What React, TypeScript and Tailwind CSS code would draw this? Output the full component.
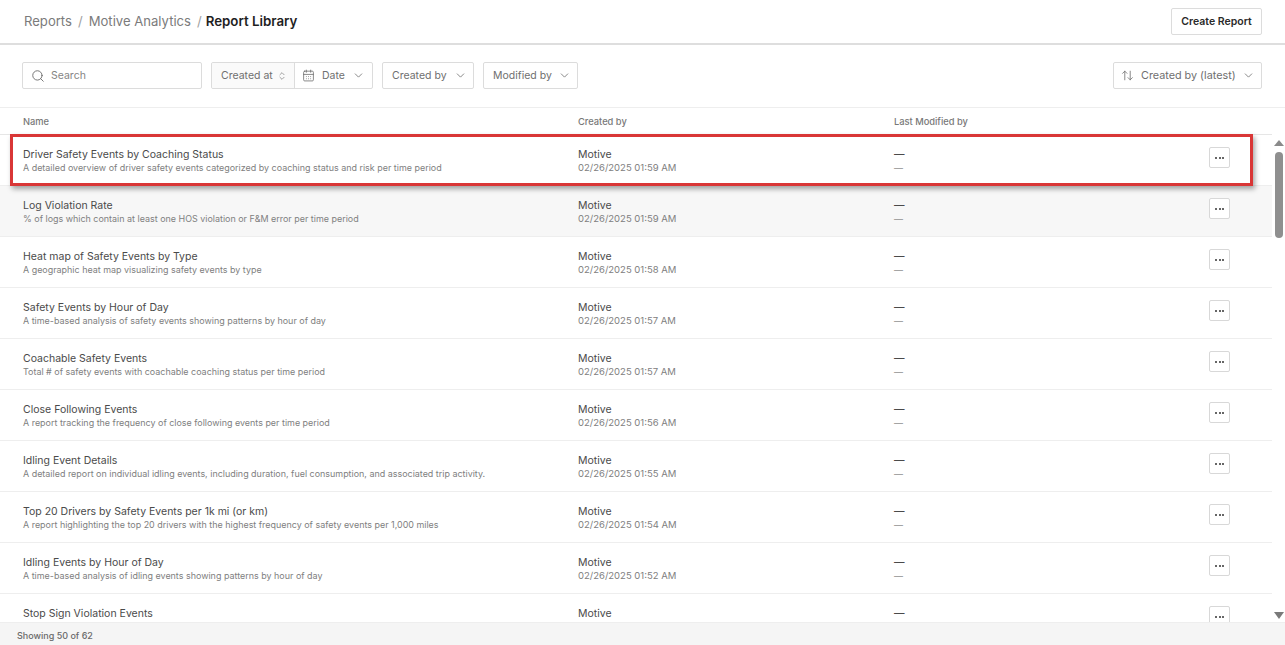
import React from "react";
import { Search, CalendarDays, ChevronDown, ChevronsUpDown, ArrowUpDown } from "lucide-react";

const rows = [
  ["Driver Safety Events by Coaching Status", "A detailed overview of driver safety events categorized by coaching status and risk per time period", "02/26/2025 01:59 AM"],
  ["Log Violation Rate", "% of logs which contain at least one HOS violation or F&M error per time period", "02/26/2025 01:59 AM"],
  ["Heat map of Safety Events by Type", "A geographic heat map visualizing safety events by type", "02/26/2025 01:58 AM"],
  ["Safety Events by Hour of Day", "A time-based analysis of safety events showing patterns by hour of day", "02/26/2025 01:57 AM"],
  ["Coachable Safety Events", "Total # of safety events with coachable coaching status per time period", "02/26/2025 01:57 AM"],
  ["Close Following Events", "A report tracking the frequency of close following events per time period", "02/26/2025 01:56 AM"],
  ["Idling Event Details", "A detailed report on individual idling events, including duration, fuel consumption, and associated trip activity.", "02/26/2025 01:55 AM"],
  ["Top 20 Drivers by Safety Events per 1k mi (or km)", "A report highlighting the top 20 drivers with the highest frequency of safety events per 1,000 miles", "02/26/2025 01:54 AM"],
  ["Idling Events by Hour of Day", "A time-based analysis of idling events showing patterns by hour of day", "02/26/2025 01:52 AM"],
  ["Stop Sign Violation Events", "A report tracking the frequency of stop sign violation events per time period", "02/26/2025 01:51 AM"],
];

const box = "h-[27px] border border-[#dcdcdc] rounded-[2px] bg-white flex items-center text-[10.5px] leading-[16px] text-[#6f6f6f] whitespace-nowrap";

export default function App() {
  return (
    <div className="relative w-[1285px] h-[645px] overflow-hidden bg-white flex flex-col font-['Inter',sans-serif]">
      <header className="h-[45px] shrink-0 border-b-2 border-[#dedede] flex items-center justify-between pl-[24px] pr-[23px]">
        <div className="flex items-center text-[13.1px] text-[#7b7b7b] gap-[6px]">
          <span>Reports</span>
          <span className="text-[#a0a0a0]">/</span>
          <span>Motive Analytics</span>
          <span className="text-[#a0a0a0]">/</span>
          <span className="font-semibold text-[#1f1f1f] text-[13.3px] ml-[-2px]">Report Library</span>
        </div>
        <button className="h-[27px] w-[91px] border border-[#dcdcdc] rounded-[2px] pt-[1px] text-[10.5px] font-semibold text-[#2a2a2a] bg-white flex items-center justify-center">
          Create Report
        </button>
      </header>

      <div className="h-[63px] shrink-0 border-b border-[#eeeeee] flex items-start justify-between pt-[17px] pl-[22px] pr-[23px]">
        <div className="flex items-center gap-[9px]">
          <div className={`${box} w-[180px] px-[8px] gap-[6px]`}>
            <Search size={14} strokeWidth={1.5} className="text-[#666]" />
            <span className="text-[#858585] pt-[1px]">Search</span>
          </div>
          <div className={`${box} w-[162px]`}>
            <div className="h-full w-[83px] bg-[#fafafa] border-r border-[#dcdcdc] flex items-center pl-[9px] gap-[4px] rounded-l-[2px]">
              <span className="pt-[1px]">Created at</span>
              <ChevronsUpDown size={10} strokeWidth={1.5} />
            </div>
            <div className="flex items-center pl-[7px] gap-[7px]">
              <CalendarDays size={13} strokeWidth={1.5} />
              <span className="pt-[1px]">Date</span>
              <ChevronDown size={13} strokeWidth={1.5} />
            </div>
          </div>
          <div className={`${box} w-[92px] pl-[9px] gap-[7px]`}>
            <span className="pt-[1px]">Created by</span>
            <ChevronDown size={13} strokeWidth={1.5} />
          </div>
          <div className={`${box} w-[95px] pl-[9px] gap-[6px]`}>
            <span className="pt-[1px]">Modified by</span>
            <ChevronDown size={13} strokeWidth={1.5} />
          </div>
        </div>
        <div className={`${box} w-[149px] pl-[7px] gap-[6px]`}>
          <ArrowUpDown size={13} strokeWidth={1.5} />
          <span className="text-[10.8px] pt-[1px] ml-[1px]">Created by (latest)</span>
          <ChevronDown size={13} strokeWidth={1.5} />
        </div>
      </div>

      <div className="h-[26px] shrink-0 flex items-center pl-[23px] pt-[1px] text-[9.3px] font-medium text-[#787878]">
        <div className="w-[555px]">Name</div>
        <div className="w-[316px]">Created by</div>
        <div>Last Modified by</div>
      </div>

      <div className="flex-1 min-h-0 flex">
        <div className="flex-1 min-w-0 overflow-hidden border-t border-[#e6e6e6]">
          {rows.map((r, i) => (
            <div
              key={r[0]}
              className={`h-[51px] shrink-0 flex items-start pl-[23px] pt-[12px] border-b border-[#eeeeee] ${i === 1 ? "bg-[#f7f7f7]" : "bg-white"}`}
            >
              <div className="w-[555px] min-w-0 pt-[1px]">
                <div className="text-[10.5px] leading-[13px] text-[#4a4a4a]">{r[0]}</div>
                <div className="text-[8.95px] leading-[13px] text-[#808080]">{r[1]}</div>
              </div>
              <div className="w-[316px] pt-[1px]">
                <div className="text-[10.5px] leading-[13px] text-[#4a4a4a]">Motive</div>
                <div className="text-[9.5px] leading-[13px] text-[#808080]">{r[2]}</div>
              </div>
              <div className="w-[315px] pt-[1px]">
                <div className="text-[10.5px] leading-[13px] font-medium text-[#4a4a4a]">—</div>
                <div className="text-[9px] leading-[13px] text-[#909090]">—</div>
              </div>
              <button className="w-[21px] h-[21px] border border-[#d8d8d8] rounded-[2px] bg-white flex items-center justify-center gap-[1.5px]">
                <span className="w-[2px] h-[2px] rounded-full bg-[#333]" />
                <span className="w-[2px] h-[2px] rounded-full bg-[#333]" />
                <span className="w-[2px] h-[2px] rounded-full bg-[#333]" />
              </button>
            </div>
          ))}
        </div>
        <div className="w-[13px] shrink-0 flex flex-col items-center pt-[6px] pb-[3px] bg-white">
          <svg width="10" height="6" viewBox="0 0 10 6"><path d="M5 0L10 6H0z" fill="#8a8a8a" /></svg>
          <div className="w-[8px] h-[86px] mt-[6px] rounded-full bg-[#8f8f8f]" />
          <svg width="10" height="7" viewBox="0 0 10 7" className="mt-auto"><path d="M0 0h10L5 7z" fill="#7a7a7a" /></svg>
        </div>
      </div>

      <footer className="h-[23px] shrink-0 bg-[#f5f5f5] border-t border-[#eeeeee] flex items-center pl-[17px] pt-[4px] text-[9px] font-medium text-[#6a6a6a]">
        Showing 50 of 62
      </footer>

      <div className="absolute left-[10px] top-[134px] w-[1243px] h-[52px] border-[3px] border-[#d93636] shadow-[2px_3px_5px_rgba(0,0,0,0.35)] pointer-events-none" />
    </div>
  );
}
